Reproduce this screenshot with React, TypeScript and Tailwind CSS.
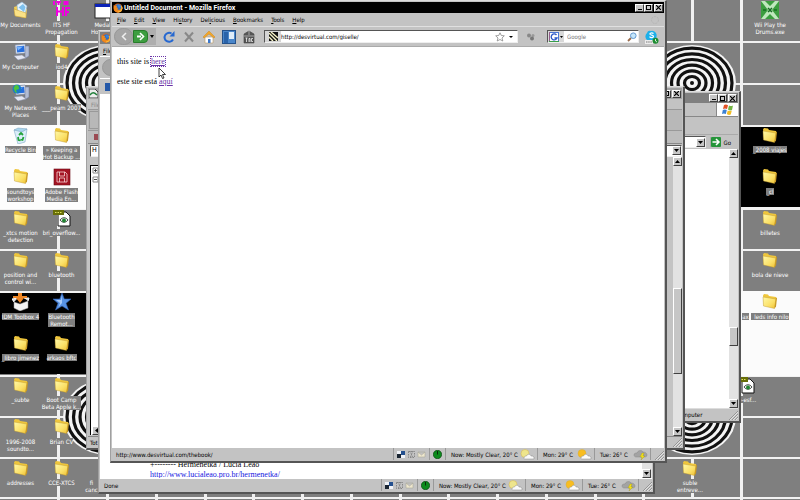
import type { ReactNode } from "react";

const UI = "font-['DejaVu_Sans_Condensed','DejaVu_Sans','Liberation_Sans',sans-serif]";

function Rings({ cx, cy }: { cx: number; cy: number }) {
  return (
    <g fill="none" stroke="#111">
      <ellipse cx={cx} cy={cy} rx="44" ry="38" fill="#f4f4f4" stroke="none" />
      {[40, 33.5, 27, 20.5, 14, 7.5].map((r) => (
        <ellipse key={r} cx={cx} cy={cy} rx={r} ry={r * 0.87} strokeWidth="3.2" />
      ))}
      <ellipse cx={cx} cy={cy} rx="2" ry="2" fill="#111" stroke="none" />
    </g>
  );
}

function Wallpaper() {
  const columns = [58, 107, 156, 205, 253, 302, 351, 400, 448, 497, 546, 595, 643, 692];
  return (
    <svg className="absolute inset-0 h-full w-full" viewBox="0 0 800 500" preserveAspectRatio="none" aria-hidden="true">
      <rect width="800" height="500" fill="#7f7f7f" />
      {[42, 84, 250, 417, 458, 498].map((y) => (
        <rect key={y} x="0" y={y - 1} width="800" height="2" fill="#f2f2f2" />
      ))}
      <rect x="0" y="208" width="800" height="2" fill="#f2f2f2" />
      <rect x="0" y="291" width="800" height="2" fill="#f2f2f2" />
      <rect x="0" y="375" width="800" height="2" fill="#f2f2f2" />
      {columns.map((x) => (
        <g key={x} fill="#f0f0f0">
          {x !== 692 && <rect x={x - 1} y="42" width="3" height="458" />}
          <rect x={x - 1} y="0" width="3" height="42" />
          <rect x={x - 1} y="458" width="3" height="40" />
        </g>
      ))}
      <rect x="740" y="0" width="3" height="500" fill="#f2f2f2" />
      <Rings cx={107} cy={83} />
      <Rings cx={692} cy={83} />
      <Rings cx={107} cy={417} />
      <Rings cx={692} cy={417} />
      <rect x="0" y="125" width="86" height="84" fill="#fdfdfd" />
      <rect x="0" y="293" width="86" height="81" fill="#000" />
      <rect x="741" y="125" width="59" height="84" fill="#f2f2f2" />
      <rect x="741" y="127" width="59" height="80" fill="#000" />
      <rect x="741" y="291" width="59" height="85" fill="#fbfbfb" />
    </svg>
  );
}

function Folder() {
  return (
    <svg width="16" height="17" viewBox="0 0 16 16" aria-hidden="true">
      <defs>
        <linearGradient id="fold" x1="0" y1="0" x2="1" y2="1">
          <stop offset="0" stopColor="#fff9a8" />
          <stop offset=".6" stopColor="#fbe067" />
          <stop offset="1" stopColor="#efbf30" />
        </linearGradient>
      </defs>
      <path d="M1 2l1-1.500 4 .5 1 1.500 7 1V12l-2 2L2 12z" fill="#efc63c" />
      <path d="M1 3.500l13 2-1.500 9.500L1.500 12.500z" fill="url(#fold)" stroke="#b8912a" strokeWidth=".4" />
      <path d="M14 4l1 .5-1 8.500-1.500 2z" fill="#c79824" />
    </svg>
  );
}

function Glyph({ kind }: { kind: string }) {
  const p = { width: 18, height: 18, viewBox: "0 0 18 18", "aria-hidden": true } as const;
  switch (kind) {
    case "none":
      return null;
    case "docs":
      return (
        <svg {...p}>
          <path d="M2 6l3-1 3 1 7 2-1 9-11-2z" fill="#f1cd58" />
          <path d="M5 4l5-3 5 4-2 8-7-2z" fill="#e7f4fe" stroke="#8fb6d6" strokeWidth=".6" />
          <path d="M6.500 6.500L11 3l2.500 3-1.500 5z" fill="#7ec1ee" />
          <path d="M2 8l12 4v5L3 15z" fill="#fbe286" stroke="#c39b31" strokeWidth=".5" />
        </svg>
      );
    case "its":
      return (
        <svg {...p} fill="none" stroke="#f000e0" strokeWidth="2">
          <path d="M1 0v4M3 1h5M5.500 0v4M15.500 1h-4v2h4M4 6v9M10 6v9M4 10.500h6M13 15V7h4M13 11h3" />
        </svg>
      );
    case "window":
      return (
        <svg {...p}>
          <rect x="1" y="3" width="17" height="14" fill="#fff" stroke="#222" />
          <rect x="1" y="3" width="17" height="3" fill="#0c23b8" />
        </svg>
      );
    case "computer":
    case "network":
      return (
        <svg {...p}>
          <path d="M3 2l10-1 1 9-10 1z" fill="#e1e7ef" stroke="#7784a5" strokeWidth=".6" />
          <path d="M4.500 3.500l7.500-.8.700 6-7.500.8z" fill="#266ede" />
          <path d="M5 4l6-.5-5 4z" fill="#7bb5fb" />
          <path d="M13 3h4v10l-3 2-1-1z" fill="#b3bcd2" stroke="#6a769b" strokeWidth=".5" />
          <path d="M2 13l8-1 4 3-8 2z" fill="#e4e7f2" stroke="#8c94b0" strokeWidth=".5" />
          {kind === "network" && (
            <g>
              <circle cx="5" cy="5" r="4.500" fill="#1b7bc8" />
              <path d="M1.500 4l2-3 3 .5L7 5 4 6l1 3-2-1z" fill="#4cc53c" />
            </g>
          )}
        </svg>
      );
    case "bin":
      return (
        <svg {...p}>
          <path d="M2 4l13-1-2 13-7 2z" fill="#dceefa" stroke="#8fb4cf" strokeWidth=".7" />
          <path d="M2 4l4-2 9 1-5 3z" fill="#a8d5ed" stroke="#799fba" strokeWidth=".5" />
          <path d="M7 9l2-2 2 2M11.500 11l-1 3-2-.5M6 11l.5 3 2 .5" fill="none" stroke="#21a23a" strokeWidth="1.800" />
        </svg>
      );
    case "flash":
      return (
        <svg {...p}>
          <rect x="1" y="1" width="16" height="16" fill="#a41424" stroke="#6b0d17" strokeWidth=".6" />
          <path d="M4 4h8l2 2v8H4zM6.500 4v4h5V4M6.500 14v-4h5v4" fill="none" stroke="#f6d4d6" strokeWidth=".8" />
        </svg>
      );
    case "image":
      return (
        <svg {...p}>
          <path d="M5 3h8l4 4v10H5z" fill="#fff" stroke="#111" />
          <path d="M0 1h11v5H0z" fill="#686e08" />
          <path d="M2 3.500h7" stroke="#dfe45b" strokeDasharray="1.500 1" />
          <path d="M7 11c2-3 6-3 8 0-2 3-6 3-8 0z" fill="#e7f2e7" stroke="#222" strokeWidth=".8" />
          <circle cx="11" cy="11.500" r="2" fill="#218532" />
        </svg>
      );
    case "box":
      return (
        <svg {...p}>
          <path d="M2 9l6 2 8-3v7l-8 3-6-3z" fill="#f4f4f4" stroke="#999" strokeWidth=".5" />
          <path d="M2 9L0 6l6-1M16 8l1-3-5 0" fill="#ddd" stroke="#fff" />
          <path d="M6 0h4v5h2l-4 5-4-5h2zM1 3h14v2H1z" fill="#ee8625" />
        </svg>
      );
    case "star":
      return (
        <svg {...p}>
          <path d="M9 0l2.300 6H18l-5 4.300L15.500 17 9 13l-6.500 4L5 10.300 0 6h6.700z" fill="#5792e4" stroke="#305fb2" strokeWidth=".6" />
          <path d="M9 2v8L5.500 14 7 10 3 7h5z" fill="#a7caf9" />
        </svg>
      );
    case "wii":
      return (
        <svg {...p}>
          <rect width="18" height="18" fill="#3b9d3f" />
          <path d="M0 0h4l5 5 5-5h4l-7 9 7 9h-4l-5-5-5 5H0l7-9z" fill="#bfe7bd" />
          <path d="M7 7l4 4M11 7l-4 4M2 9h3M13 9h3" stroke="#186d24" strokeWidth="1.500" />
        </svg>
      );
    default:
      return <Folder />;
  }
}

type Item = { kind?: string; lines: string[]; at: string };

const leftItems: Item[] = [
  { kind: "docs", lines: ["My Documents"], at: "col-start-1 row-start-1" },
  { kind: "computer", lines: ["My Computer"], at: "col-start-1 row-start-2" },
  { kind: "network", lines: ["My Network", "Places"], at: "col-start-1 row-start-3" },
  { kind: "bin", lines: ["Recycle Bin"], at: "col-start-1 row-start-4" },
  { lines: ["soundtoys", "workshop"], at: "col-start-1 row-start-5" },
  { lines: ["_xtcs motion", "detection"], at: "col-start-1 row-start-6" },
  { lines: ["position and", "control wi..."], at: "col-start-1 row-start-7" },
  { kind: "box", lines: ["IDM Toolbox 4"], at: "col-start-1 row-start-8" },
  { lines: ["_libro jimenez"], at: "col-start-1 row-start-9" },
  { lines: ["_subte"], at: "col-start-1 row-start-10" },
  { lines: ["1996-2008", "soundto..."], at: "col-start-1 row-start-11" },
  { lines: ["addresses"], at: "col-start-1 row-start-12" },
  { kind: "its", lines: ["ITS HF", "Propagation"], at: "col-start-2 row-start-1" },
  { lines: ["iod4"], at: "col-start-2 row-start-2" },
  { lines: ["___peam 2007"], at: "col-start-2 row-start-3" },
  { lines: ["» Keeping a", "Hot Backup ..."], at: "col-start-2 row-start-4" },
  { kind: "flash", lines: ["Adobe Flash", "Media En..."], at: "col-start-2 row-start-5" },
  { kind: "image", lines: ["bri_overflow..."], at: "col-start-2 row-start-6" },
  { lines: ["bluetooth"], at: "col-start-2 row-start-7" },
  { kind: "star", lines: ["Bluetooth", "Remot..."], at: "col-start-2 row-start-8" },
  { lines: ["arkaos bftc"], at: "col-start-2 row-start-9" },
  { lines: ["Boot Camp", "Beta Apple k..."], at: "col-start-2 row-start-10" },
  { lines: ["Brian CV"], at: "col-start-2 row-start-11" },
  { lines: ["CCE-XTCS"], at: "col-start-2 row-start-12" },
  { kind: "window", lines: ["Medal", "Honor ..."], at: "col-start-3 row-start-1" },
  { kind: "none", lines: ["fi", "canc"], at: "col-start-3 row-start-12 mr-[22px]" },
];

const rightItems: Item[] = [
  { kind: "wii", lines: ["Wii Play the", "Drums.exe"], at: "col-start-3 row-start-1" },
  { lines: ["_2008 viajes"], at: "col-start-3 row-start-4" },
  { lines: ["_cl"], at: "col-start-3 row-start-5" },
  { lines: ["billetes"], at: "col-start-3 row-start-6" },
  { lines: ["bola de nieve"], at: "col-start-3 row-start-7" },
  { lines: ["_leds info nilo"], at: "col-start-3 row-start-8" },
  { kind: "none", lines: ["ax"], at: "col-start-2 row-start-8" },
  { kind: "image", lines: ["vo-esf..."], at: "col-start-2 row-start-10" },
  { lines: ["suble", "entreve..."], at: "col-start-1 row-start-12" },
];

function DesktopIcons({ items, place }: { items: Item[]; place: string }) {
  return (
    <div className={`absolute inset-y-0 grid grid-rows-12 ${place}`}>
      {items.map((it) => (
        <button key={it.at} className={`flex min-w-0 flex-col items-center ${it.at}`}>
          <span className="flex h-5 shrink-0 items-center">
            <Glyph kind={it.kind ?? "folder"} />
          </span>
          <span className="mt-px bg-[#7f7f7f] text-center text-[6px] leading-[7px] whitespace-nowrap text-white">
            {it.lines.map((l) => (
              <span key={l} className="block">{l}</span>
            ))}
          </span>
        </button>
      ))}
    </div>
  );
}

const RAISED = "border border-t-white border-l-white border-r-[#404040] border-b-[#404040] bg-[#c6c6c6]";
const SUNKEN = "border border-t-[#555] border-l-[#555] border-r-[#eee] border-b-[#eee]";

function Window({ place, children }: { place: string; children: ReactNode }) {
  return (
    <section className={`absolute flex flex-col overflow-hidden border border-t-[#dcdcdc] border-l-[#a0a0a0] border-r-2 border-b-2 border-r-[#555] border-b-[#555] bg-[#c3c3c3] p-px ${place}`}>
      {children}
    </section>
  );
}

function Caption() {
  return (
    <div className="flex shrink-0 pr-px">
      <button aria-label="Minimize" className={`flex h-2 w-[9px] items-end justify-center ${RAISED}`}>
        <span className="mb-px h-px w-1 bg-black" />
      </button>
      <button aria-label="Maximize" className={`flex h-2 w-[9px] items-center justify-center ${RAISED}`}>
        <span className="h-[5px] w-[5px] border border-black" />
      </button>
      <button aria-label="Close" className={`ml-px flex h-2 w-[9px] items-center justify-center ${RAISED}`}>
        <svg width="5" height="5" viewBox="0 0 5 5"><path d="M0 0l5 5M5 0L0 5" stroke="#000" strokeWidth="1.200" /></svg>
      </button>
    </div>
  );
}

function Arrow({ dir, label }: { dir: "up" | "down" | "left"; label: string }) {
  const d = { up: "M0 3l2.500-3L5 3z", down: "M0 0h5L2.500 3z", left: "M4 0v5L1 2.500z" }[dir];
  return (
    <button aria-label={label} className={`flex h-[9px] w-[9px] shrink-0 items-center justify-center ${RAISED}`}>
      <svg width="5" height={dir === "left" ? 5 : 3} viewBox={dir === "left" ? "0 0 5 5" : "0 0 5 3"}><path d={d} /></svg>
    </button>
  );
}

function FirefoxLogo() {
  return (
    <svg width="10" height="10" viewBox="0 0 10 10" className="shrink-0" aria-hidden="true">
      <circle cx="5" cy="5" r="4.500" fill="#e66a12" />
      <circle cx="5.300" cy="4.300" r="3" fill="#2c6fc4" />
      <path d="M.6 2l1.600 1 2-.2-.7 1.600 1.700.6-1 1.200 2 .8 2.300-2L8 2l1.700 3-1.500 3.700-3.700 1L1 7.600z" fill="#f08a1d" />
      <path d="M4.500 1.500l3 .5.500 2-2 1-1-1z" fill="#3b82d6" />
      <path d="M8 3l1 2-1 3-3 1" fill="none" stroke="#fbc947" strokeWidth=".8" />
    </svg>
  );
}

function Grip() {
  return (
    <svg width="9" height="9" viewBox="0 0 9 9" className="shrink-0 self-end" aria-hidden="true">
      <path d="M0 9l9-9M3 9l6-6M6 9l3-3" stroke="#888" strokeWidth=".8" />
      <path d="M1 9l8-8M4 9l5-5M7 9l2-2" stroke="#f5f5f5" strokeWidth=".6" />
    </svg>
  );
}

function Weather({ kind }: { kind: "pale" | "sun" | "storm" }) {
  return (
    <svg width="15" height="11" viewBox="0 0 15 11" className="shrink-0" aria-hidden="true">
      {kind !== "storm" && <circle cx="5" cy="4.500" r="4" fill={kind === "sun" ? "#f8bd21" : "#eee58c"} stroke="#d0a93c" strokeWidth=".4" />}
      <path
        d={kind === "storm" ? "M1 6c0-2 2-2 3-2 1-3 5-3 6-1 2 0 4 1 4 3s-2 2-3 2H3C2 8 1 7 1 6z" : "M4 9c0-2 2-2 2.500-2 1-2.500 4-2 4.500 0 2-.5 3.500 1 3 3H5C4 10 4 9.500 4 9z"}
        fill={kind === "storm" ? "#a3a3a3" : "#fafafa"}
        stroke="#888"
        strokeWidth=".5"
      />
      {kind === "storm" && <path d="M9 4L7 8h2l-1 3 4-4h-2l1-3z" fill="#f2df19" stroke="#8c8316" strokeWidth=".3" />}
    </svg>
  );
}

function Forecast({ text, kind, width }: { text: string; kind: "pale" | "sun" | "storm"; width: string }) {
  return (
    <span className={`flex h-full shrink-0 items-center justify-between border-r border-[#999] pr-[2px] pl-[5px] ${width}`}>
      {text}
      <Weather kind={kind} />
    </span>
  );
}

function StatusBar({ text }: { text: string }) {
  return (
    <footer className="flex h-[13px] shrink-0 items-center border-t border-white text-[6px] whitespace-nowrap text-black">
      <span className="flex-1 pl-1">{text}</span>
      <span className="flex h-full w-[37px] shrink-0 items-center border-r border-l border-[#999] pl-[3px]">
        <svg width="30" height="9" viewBox="0 0 30 9" aria-hidden="true">
          <rect x="0" y="1" width="8" height="7" fill="#f0f3f8" />
          <rect x="4" y="1" width="4" height="4" fill="#24508f" />
          <rect x="0" y="4" width="4" height="4" fill="#1a2532" />
          <path d="M11.500 1.500h6v6h-6zM13 1l3 7M16 1l-3 7" fill="none" stroke="#777" strokeWidth=".8" strokeDasharray="1.500 1" />
          <path d="M21 2h7v5h-7zl3.500 3L28 2" fill="#eee7ce" stroke="#aaa79b" strokeWidth=".6" />
        </svg>
      </span>
      <span className="flex h-full shrink-0 items-center border-r border-[#999] px-[3px]">
        <svg width="9" height="9" viewBox="0 0 9 9" aria-hidden="true">
          <circle cx="4.500" cy="4.500" r="4.200" fill="#0c8a1c" stroke="#083c0d" strokeWidth=".6" />
          <path d="M4.500 1v3.500" stroke="#062b08" />
        </svg>
      </span>
      <Forecast text="Now: Mostly Clear, 20° C" kind="pale" width="w-[92px]" />
      <Forecast text="Mon: 29° C" kind="sun" width="w-[57px]" />
      <Forecast text="Tue: 26° C" kind="storm" width="w-[56px]" />
      <span className="ml-1 flex h-full shrink-0"><Grip /></span>
    </footer>
  );
}

function BackForward() {
  return (
    <div className="flex h-[17px] shrink-0 items-center rounded-l-full rounded-r bg-[#aeaeae]">
      <button aria-label="Back" className="flex h-[17px] w-[19px] items-center justify-center rounded-full border border-[#999] bg-[#a5a5a5]">
        <svg width="6" height="9" viewBox="0 0 6 9"><path d="M5 1L1.500 4.500 5 8" fill="none" stroke="#eee" strokeWidth="1.500" /></svg>
      </button>
      <button aria-label="Forward" className="flex h-[13px] w-[15px] items-center justify-center rounded-r-sm border border-[#287c2b] bg-[#3d9e40]">
        <svg width="8" height="9" viewBox="0 0 8 9"><path d="M0 4.500h4" stroke="#fff" strokeWidth="2" /><path d="M3 1l3.500 3.500L3 8" fill="none" stroke="#fff" strokeWidth="1.600" /></svg>
      </button>
      <button aria-label="Recent pages" className="flex w-2 justify-center">
        <svg width="4" height="3" viewBox="0 0 4 3"><path d="M0 0h4L2 3z" /></svg>
      </button>
    </div>
  );
}

function Tool({ label, children }: { label: string; children: ReactNode }) {
  return (
    <button aria-label={label} className="flex w-[14px] shrink-0 justify-center">
      <svg width="14" height="14" viewBox="0 0 14 14">{children}</svg>
    </button>
  );
}

const menus: [string, string, string][] = [
  ["", "F", "ile"], ["", "E", "dit"], ["", "V", "iew"], ["Hi", "s", "tory"], ["Del", "i", "cious"], ["", "B", "ookmarks"], ["", "T", "ools"], ["", "H", "elp"],
];

function Toolbar() {
  return (
    <div className="flex h-[21px] shrink-0 items-center border-t border-t-[#e0e0e0] border-b border-b-[#aaa] pl-[2px]">
      <BackForward />
      <div className="ml-[6px] flex shrink-0 gap-[6px]">
        <Tool label="Reload">
          <path d="M11 9.500A4.500 4.500 0 1 1 9.500 3.500" fill="none" stroke="#2668d0" strokeWidth="2" />
          <path d="M12.500 1v5.500H7.500z" fill="#2668d0" />
        </Tool>
        <Tool label="Stop"><path d="M3 2.500l8 9M11 2.500l-8 9" stroke="#888" strokeWidth="2" /></Tool>
        <Tool label="Home">
          <path d="M3 7h8v6H3z" fill="#fff" stroke="#b89862" strokeWidth=".6" />
          <path d="M7 1l6 6-1 1-5-4-5 4-1-1z" fill="#f4a728" stroke="#c67c12" strokeWidth=".4" />
          <path d="M6 9h2.500v4H6z" fill="#3976cb" />
        </Tool>
        <Tool label="Sidebar">
          <rect x=".5" y=".5" width="13" height="13" fill="#4a86ca" stroke="#25528b" />
          <path d="M2 2h4v11H2z" fill="#2a63a9" />
          <path d="M7 2h5v7H7z" fill="#e0edf9" />
        </Tool>
        <Tool label="Tag">
          <path d="M2 4l5-3 5 3v9H2z" fill="#555" stroke="#444" strokeWidth=".6" />
          <path d="M2 6h10M7 1v4" stroke="#ccc" strokeWidth=".7" />
          <path d="M3.500 8h2M4.500 8v4M7 12V8.500h1V12M11 8.500H9.500v3H11" stroke="#eee" strokeWidth=".8" fill="none" />
        </Tool>
      </div>
      <div className={`ml-2 flex h-[13px] min-w-0 flex-1 items-center bg-white ${SUNKEN}`}>
        <span className="flex h-full w-4 shrink-0 items-center justify-center bg-[#d5d5d5]">
          <svg width="9" height="9" viewBox="0 0 9 9" aria-hidden="true">
            <rect width="9" height="9" fill="#111" />
            <path d="M0 1l8 8M2 0l7 6M0 5l4 4" stroke="#f6f3c6" strokeWidth="1.400" />
          </svg>
        </span>
        <input aria-label="Address" defaultValue="http://desvirtual.com/giselle/" className="h-full min-w-0 flex-1 bg-white text-[6px] text-black outline-none" />
        <button aria-label="Bookmark this page">
          <svg width="10" height="10" viewBox="0 0 10 10"><path d="M5 .8l1.300 2.700 3 .3L7 6l.8 3L5 7.500 2.200 9 3 6 .7 3.800l3-.3z" fill="#fff" stroke="#888" strokeWidth=".8" /></svg>
        </button>
        <button aria-label="Show history" className="mx-1">
          <svg width="4" height="2" viewBox="0 0 4 2"><path d="M0 0h4L2 2z" /></svg>
        </button>
      </div>
      <button aria-label="Delicious" className="mr-3 ml-2 shrink-0">
        <svg width="9" height="8" viewBox="0 0 9 8"><circle cx="3" cy="2.500" r="2" fill="#888" /><circle cx="7" cy="2.500" r="1.500" fill="#999" /><circle cx="6" cy="5.500" r="2" fill="#777" /></svg>
      </button>
      <div className={`flex h-[13px] w-[92px] shrink-0 items-center bg-white ${SUNKEN}`}>
        <button aria-label="Search engine" className="flex h-full w-4 shrink-0 items-center gap-px bg-[#d8d8d8] pl-px">
          <svg width="10" height="10" viewBox="0 0 10 10">
            <rect x=".5" y=".5" width="9" height="9" fill="#fff" stroke="#4a77d4" />
            <path d="M0 0v10" stroke="#d44" /><path d="M0 9.500h10" stroke="#3a9e48" />
            <path d="M7.500 3A3 3 0 1 0 8 6H5.500" fill="none" stroke="#2956c6" strokeWidth="1.300" />
          </svg>
          <svg width="3" height="2" viewBox="0 0 3 2"><path d="M0 0h3L1.500 2z" /></svg>
        </button>
        <input aria-label="Search" placeholder="Google" className="h-full min-w-0 flex-1 bg-white pl-[3px] text-[6px] outline-none placeholder:text-[#777]" />
        <button aria-label="Search the web" className="pr-px">
          <svg width="10" height="10" viewBox="0 0 10 10"><path d="M1 9l3-3" stroke="#996a4a" strokeWidth="1.800" /><circle cx="6.300" cy="3.700" r="2.800" fill="#c6e7fb" stroke="#649ad0" /></svg>
        </button>
      </div>
      <button aria-label="Skype" className="mr-[5px] ml-[6px] shrink-0">
        <svg width="14" height="14" viewBox="0 0 14 14">
          <path d="M2 3a3 3 0 0 1 4-2 4.500 4.500 0 0 1 5.500 5.500A3 3 0 0 1 8 10a4.500 4.500 0 0 1-6-7z" fill="#1cb0ea" />
          <path d="M8.500 3.500C7 2.500 4.500 3 5 4.300c.5 1 3.500.6 3.500 2C8.500 8 5.500 8 4.500 6.700" fill="none" stroke="#fff" strokeWidth="1.200" />
          <path d="M0 10h8v4H0z" fill="#ececec" />
          <path d="M1 12h6" stroke="#777" strokeDasharray="1.500 .7" />
          <circle cx="10.500" cy="10.800" r="3" fill="#1d8d31" />
          <path d="M10.500 9v2l1.500 1" stroke="#fff" fill="none" strokeWidth=".8" />
        </svg>
      </button>
    </div>
  );
}

function MainBrowser() {
  return (
    <Window place="top-0 right-[133px] bottom-[37px] left-[110px]">
      <header className="flex h-[11px] shrink-0 items-center bg-black">
        <span className="flex w-3 justify-center"><FirefoxLogo /></span>
        <h1 className="flex-1 font-['Roboto','Liberation_Sans',sans-serif] text-[7px] leading-[10px] font-bold text-white">Untitled Document - Mozilla Firefox</h1>
        <Caption />
      </header>
      <nav className="flex h-[13px] shrink-0 items-center gap-2 pl-[5px]">
        {menus.map(([a, b, c]) => (
          <button key={a + b + c} className="text-[6px] leading-[9px] text-black">{a}<u>{b}</u>{c}</button>
        ))}
        <svg width="10" height="10" viewBox="0 0 10 10" className="mr-1 ml-auto" aria-hidden="true">
          <circle cx="5" cy="5" r="3.500" fill="none" stroke="#b5b5b5" strokeDasharray="2 1" />
        </svg>
      </nav>
      <Toolbar />
      <main className="min-h-0 flex-1 bg-white px-[5px] pt-[10px] font-['Liberation_Serif',serif] text-[8px] leading-[10px] text-black">
        <p>this site is <a href="#thebook" className="text-[#6a35a8] underline outline-1 outline-dotted outline-[#6a35a8]">here</a></p>
        <p className="mt-[10px]">este site está <a href="#aqui" className="text-[#6a35a8] underline">aquí</a></p>
      </main>
      <StatusBar text="http://www.desvirtual.com/thebook/" />
    </Window>
  );
}

function BackBrowser() {
  return (
    <Window place="top-[30px] right-[145px] bottom-[6px] left-[98px]">
      <header className="flex h-[12px] shrink-0 items-center bg-[#808080] pl-px"><FirefoxLogo /></header>
      <div className="flex h-[12px] shrink-0 items-center pl-[3px] text-[6px]"><u>F</u>ile</div>
      <div className="flex h-[22px] shrink-0 items-center border-t border-white pl-[2px]">
        <span className="h-[17px] w-[19px] rounded-full border border-[#999] bg-[#a5a5a5]" />
      </div>
      <div className="flex h-[16px] shrink-0 items-center border-t border-white pl-[5px]">
        <span className="h-2 w-2 bg-[#2458a8]" />
      </div>
      <div className="flex min-h-0 flex-1 overflow-hidden bg-white">
        <div className="-mb-[2px] flex min-w-0 flex-1 flex-col justify-end pl-[50px] font-['Liberation_Serif',serif] text-[8px] leading-[10px]">
          <p>+-------- Hermenetka / Lucia Leão</p>
          <p><a href="#hermenetka" className="text-[#1414e0] underline">http://www.lucialeao.pro.br/hermenetka/</a></p>
        </div>
        <div className="flex w-[10px] flex-col justify-end bg-[#e2e2e2]"><Arrow dir="down" label="Scroll down" /></div>
      </div>
      <StatusBar text="Done" />
    </Window>
  );
}

function EditorWindow() {
  return (
    <Window place="top-[86px] right-[115px] bottom-[50px] left-[86px]">
      <header className="flex h-[11px] shrink-0 items-center justify-between bg-[#a0a0a0] pl-px">
        <svg width="9" height="9" viewBox="0 0 9 9" aria-hidden="true"><path d="M0 0h6l3 3v6H0z" fill="#eee" stroke="#444" /><path d="M1 6c2-3 4-3 7 0" stroke="#21803a" strokeWidth="1.500" fill="none" /></svg>
        <Caption />
      </header>
      <div className="flex h-[10px] shrink-0 items-center pl-[3px] text-[6px] text-[#888]">File</div>
      <div className="flex h-[22px] shrink-0 border-t border-b border-[#999] bg-[#b8b8b8]"><span className="m-px w-3 border border-[#999]" /></div>
      <div className="flex h-[13px] shrink-0 items-center border-b border-[#888] bg-[#bdbdbd] pl-[6px]"><span className="h-[6px] w-[5px] bg-[#9b4a52]" /></div>
      <div className="flex h-[13px] shrink-0 items-center bg-[#c3c3c3]">
        <div className={`ml-[2px] flex h-[12px] flex-1 items-center justify-between bg-white pl-px text-[7px] ${SUNKEN}`}>
          H <Arrow dir="down" label="Choose address" />
        </div>
      </div>
      <div className="flex min-h-0 flex-1">
        <div className="mt-2 mb-px ml-[2px] flex w-5 flex-col border-t border-l border-black bg-white pt-px pl-px">
          <svg width="7" height="17" viewBox="0 0 7 17" className="shrink-0" aria-hidden="true">
            <path d="M1 1h5v5H1zM1 10h5v5H1z" fill="#fff" stroke="#888" />
            <path d="M2 3.500h3M3.500 2v3M2 12.500h3" stroke="#222" strokeWidth=".8" />
          </svg>
          <span className="mt-auto"><Arrow dir="left" label="Scroll left" /></span>
        </div>
        <div className="flex-1" />
        <div className="flex w-[9px] flex-col bg-[#e2e2e2]">
          <Arrow dir="up" label="Scroll up" />
          <span className="flex-[124]" />
          <span className={`flex-[86] ${RAISED}`} />
          <span className="flex-[54]" />
          <Arrow dir="down" label="Scroll down" />
        </div>
      </div>
      <footer className="flex h-[11px] shrink-0 items-center justify-between border-t border-[#888] pl-[2px] text-[6px]">
        Tot <Grip />
      </footer>
    </Window>
  );
}

function ExplorerWindow() {
  return (
    <Window place="top-[91px] right-[59px] bottom-[77px] left-[640px]">
      <header className="flex h-[10px] shrink-0 items-center justify-end bg-[#808080]"><Caption /></header>
      <div className="flex h-[14px] shrink-0 justify-end border-b border-[#888]">
        <span className="flex w-[22px] items-center justify-center border-l border-[#888] bg-white">
          <svg width="12" height="11" viewBox="0 0 12 11" aria-hidden="true">
            <path d="M2 1q2-1 4 .3L5 5Q3 4 1 5z" fill="#e35226" />
            <path d="M7 1.500q2 1 4 0L10 6q-2 1-4-.5z" fill="#75b544" />
            <path d="M.8 6q2-1 4 0l-1 4q-2-1-3.800 0z" fill="#3c82d4" />
            <path d="M5.800 6.500q2 1 4 0l-1 4q-2 1-4-.5z" fill="#f1bd28" />
          </svg>
        </span>
      </div>
      <div className="flex h-[18px] shrink-0 border-b border-[#aaa]" />
      <div className="flex h-[14px] shrink-0 items-center pr-[7px] text-[6px]">
        <div className={`flex h-[12px] flex-1 items-center justify-end bg-white ${SUNKEN}`}><Arrow dir="down" label="Address list" /></div>
        <button className="ml-[4px] flex items-center gap-[3px] border-l border-[#aaa]">
          <svg width="10" height="10" viewBox="0 0 10 10" aria-hidden="true"><rect width="10" height="10" rx="1" fill="#25953a" /><path d="M1.500 5H8M5 2l3 3-3 3" fill="none" stroke="#fff" strokeWidth="1.500" /></svg>
          Go
        </button>
      </div>
      <div className="flex min-h-0 flex-1 bg-white">
        <span className="flex-1" />
        <div className="flex w-[9px] flex-col bg-[#e2e2e2]">
          <Arrow dir="up" label="Scroll up" />
          <span className="flex-[170]" />
          <span className={`flex-[18] ${RAISED}`} />
          <span className="flex-[53]" />
          <Arrow dir="down" label="Scroll down" />
        </div>
      </div>
      <footer className="flex h-[12px] shrink-0 items-center justify-between border-t border-[#ddd] pl-[24px] text-[6px] whitespace-nowrap">
        My Computer <Grip />
      </footer>
    </Window>
  );
}

export default function App() {
  return (
    <div className={`relative h-screen w-full overflow-hidden ${UI}`}>
      <Wallpaper />
      <DesktopIcons items={leftItems} place="left-0 grid-cols-[41px_41px_41px]" />
      <DesktopIcons items={rightItems} place="right-[5px] grid-cols-[40px_35px_50px] [&>.col-start-2]:-mr-9" />
      <ExplorerWindow />
      <EditorWindow />
      <BackBrowser />
      <MainBrowser />
      <svg width="8" height="12" viewBox="0 0 8 12" className="absolute top-[67px] left-[158px]" aria-hidden="true">
        <path d="M1 1v9l2-2 1.500 3.500L6 11 4.500 7.500h3z" fill="#fff" stroke="#111" strokeWidth=".8" />
      </svg>
    </div>
  );
}
